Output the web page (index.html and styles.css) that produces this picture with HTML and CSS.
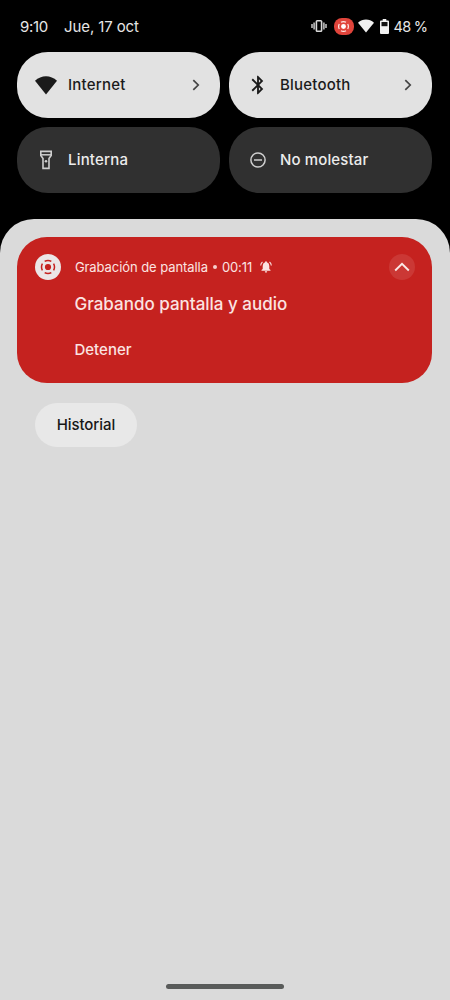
FILE: index.html
```
<!DOCTYPE html>
<html lang="es">
<head>
<meta charset="utf-8">
<title>Panel de notificaciones</title>
<link rel="stylesheet" href="styles.css">
</head>
<body>
<header class="status">
  <span class="time">9:10</span>
  <span class="date">Jue, 17 oct</span>
  <div class="indicators">
    <svg width="16" height="14" viewBox="0 0 16 14"><path d="M1 5v4M3.100 3.500v7M12.900 3.500v7M15 5v4" stroke="#c9c9c9" stroke-width="1.500"/><rect x="5.400" y="1.800" width="5.200" height="10.400" rx=".8" fill="none" stroke="#d8d8d8" stroke-width="1.600"/></svg>
    <span class="rec-chip"><svg width="13" height="13" viewBox="0 0 16 16"><circle cx="8" cy="8" r="3" fill="#fff"/><circle cx="8" cy="8" r="6" fill="none" stroke="#ffe9e6" stroke-width="1.500" pathLength="40" stroke-dasharray="7 3" stroke-dashoffset="3.500"/></svg></span>
    <svg width="16" height="14" viewBox="0 0 16 14"><path d="M0 3.700C4.600-.5 11.400-.5 16 3.700L8 13.500Z" fill="#f1f1f1"/></svg>
    <svg class="battery" width="9" height="15" viewBox="0 0 9 15"><path d="M2.700 0h3.600v1.600H8q1 0 1 1V14q0 1-1 1H1q-1 0-1-1V2.600q0-1 1-1h1.700Z" fill="#f1f1f1"/><path d="M1.500 3h6v4.200h-6Z" fill="#111"/></svg>
    <span class="percent">48 %</span>
  </div>
</header>
<section class="tiles">
  <div class="tile on"><span class="tile-icon"><svg width="22" height="19" viewBox="0 0 22 19"><path d="M0 4.800C6.300-1.300 15.700-1.300 22 4.800L11 18.500Z" fill="#1a1a1a"/></svg></span><span class="label internet">Internet</span><svg class="chevron" width="8" height="12" viewBox="0 0 8 12"><path d="M1.300 1.200 6.200 6 1.300 10.800" fill="none" stroke="#444" stroke-width="1.700"/></svg></div>
  <div class="tile on"><span class="tile-icon"><svg width="22" height="22" viewBox="0 0 24 24"><path d="M17.710 7.710 12 2h-1v7.590L6.410 5 5 6.410 10.590 12 5 17.590 6.410 19 11 14.410V22h1l5.710-5.710-4.300-4.290 4.300-4.290zM13 5.830l1.880 1.880L13 9.590V5.830zm1.880 10.460L13 18.170v-3.760l1.880 1.880z" fill="#1a1a1a"/></svg></span><span class="label bluetooth">Bluetooth</span><svg class="chevron" width="8" height="12" viewBox="0 0 8 12"><path d="M1.300 1.200 6.200 6 1.300 10.800" fill="none" stroke="#444" stroke-width="1.700"/></svg></div>
  <div class="tile"><span class="tile-icon"><svg width="12" height="20" viewBox="0 0 12 20"><path d="M.8 1.400h10.400v4.200L9 8.500v9.900H3V8.500L.8 5.600Z" fill="none" stroke="#cfcfcf" stroke-width="1.600"/><path d="M1 4.800h10" stroke="#cfcfcf" stroke-width="1.500"/><circle cx="6" cy="11.300" r="1.300" fill="#cfcfcf"/></svg></span><span class="label linterna">Linterna</span></div>
  <div class="tile"><span class="tile-icon"><svg width="16" height="16" viewBox="0 0 16 16"><circle cx="8" cy="8" r="7.100" fill="none" stroke="#cfcfcf" stroke-width="1.500"/><path d="M4 8h8" stroke="#cfcfcf" stroke-width="1.500"/></svg></span><span class="label molestar">No molestar</span></div>
</section>
<main class="shade">
  <article class="card">
    <div class="card-head">
      <span class="app-icon"><svg width="16" height="16" viewBox="0 0 16 16"><circle cx="8" cy="8" r="3.100" fill="#c5221f"/><circle cx="8" cy="8" r="6.500" fill="none" stroke="#c5221f" stroke-width="1.500" pathLength="40" stroke-dasharray="7 3" stroke-dashoffset="3.500"/></svg></span>
      <span class="app-name">Grabación de pantalla</span><span class="dot"></span><span class="elapsed">00:11</span>
      <svg class="bell" width="12" height="12" viewBox="0 0 12 12"><path d="M6 .2q.9 0 .9 1Q9.300 2 9.300 5v3l1.200 1.100v.6h-9v-.6L2.700 8V5q0-3 2.400-3.800q0-1 .9-1ZM4.800 10.300h2.400Q7.200 11.700 6 11.700T4.800 10.300Z" fill="#fbe4e2"/><path d="M.7 4.600Q.8 2.300 2.500 1M11.300 4.600Q11.200 2.300 9.500 1" fill="none" stroke="#fbe4e2" stroke-width="1.100"/></svg>
      <span class="collapse"><svg width="16" height="10" viewBox="0 0 16 10"><path d="M1.200 8.500 8 1.800l6.800 6.700" fill="none" stroke="#fbe9e7" stroke-width="1.900"/></svg></span>
    </div>
    <h1 class="title">Grabando pantalla y audio</h1>
    <span class="action">Detener</span>
  </article>
  <span class="history">Historial</span>
  <div class="home-bar"></div>
</main>
</body>
</html>
```
FILE: styles.css
```
* { box-sizing: border-box; }
body { margin: 0; width: 450px; height: 1000px; background: #000; font-family: Inter, Roboto, sans-serif; font-size: 15px; display: flex; flex-direction: column; overflow: hidden; }
svg { display: block; flex: none; }
span { white-space: nowrap; }
.status { height: 52px; padding: 0 23px 0 20px; display: flex; align-items: center; color: #e6e6e6; flex: none; }
.time { width: 28px; letter-spacing: -.3px; }
.date { margin-left: 16px; letter-spacing: -.1px; }
.indicators { margin-left: auto; display: flex; align-items: center; }
.rec-chip { width: 20px; height: 17px; border-radius: 8px; background: #e0443b; display: flex; align-items: center; justify-content: center; margin: 0 4px 0 7px; }
.battery { margin: 0 5px 0 6px; }
.percent { width: 33.500px; font-size: 14.500px; letter-spacing: -.5px; word-spacing: -.6px; }
.tiles { display: grid; grid-template-columns: 203px 203px; gap: 9px; padding-left: 17.400px; grid-auto-rows: 66px; flex: none; }
.tile { border-radius: 31px; background: #303030; color: #ececec; display: flex; align-items: center; padding: 0 20px 0 17px; font-weight: 500; }
.tile.on { background: #e2e2e2; color: #1b1b1b; }
.tile-icon { width: 23px; display: flex; justify-content: center; margin-right: 10.600px; }
.label { padding-bottom: 1.500px; }
.internet { letter-spacing: .24px; }
.bluetooth { letter-spacing: .2px; }
.linterna { letter-spacing: .2px; }
.molestar { letter-spacing: .13px; }
.chevron { margin-left: auto; }
.shade { flex: 1; margin-top: 26px; background: #dadada; border-radius: 34px 34px 0 0; padding: 18px 17.400px 0; display: flex; flex-direction: column; align-items: flex-start; }
.card { width: 415px; height: 146px; border-radius: 30px; background: #c5221f; color: #fbe4e2; padding: 16.500px 17.500px; flex: none; }
.card-head { display: flex; align-items: center; height: 27px; font-size: 13px; }
.app-icon, .collapse { width: 26px; height: 26px; border-radius: 50%; display: flex; align-items: center; justify-content: center; }
.app-icon { background: #ebe6e6; margin-right: 14px; }
.app-name { letter-spacing: -.07px; }
.elapsed { letter-spacing: -.1px; }
.collapse { background: #cb3835; margin-left: auto; }
.dot { width: 4px; height: 4px; border-radius: 50%; background: #f6cfcd; margin: 0 5px; }
.bell { margin-left: 8px; }
.title { margin: 12.500px 0 0 39.600px; font-size: 17px; line-height: 22px; font-weight: 500; white-space: nowrap; }
.action { display: block; margin: 25px 0 0 39.600px; line-height: 20px; font-weight: 500; font-size: 15px; }
.history { margin: 19.500px 0 0 17.500px; width: 102px; height: 44px; border-radius: 22px; background: #e8e8e8; color: #171717; display: flex; align-items: center; justify-content: center; font-weight: 500; letter-spacing: -.08px; padding-bottom: 1px; }
.home-bar { width: 118px; height: 5px; border-radius: 3px; background: #595b5a; margin: auto auto 11px; }
```
